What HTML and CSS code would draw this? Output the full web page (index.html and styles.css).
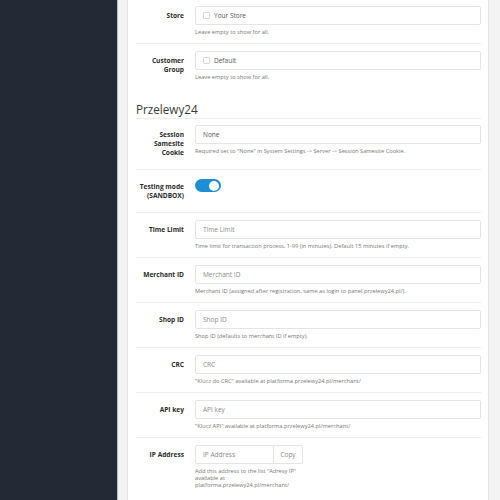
FILE: index.html
```html
<!DOCTYPE html>
<html lang="en">
<head>
    <meta charset="UTF-8">
    <meta name="viewport" content="width=device-width, initial-scale=1.0">
    <title>Przelewy24 - Payment Settings</title>
    <link rel="stylesheet" href="styles.css">
</head>
<body>
    <div class="page">
        <div class="sidebar"></div>
        <div class="content">
            <div class="card">
                <div class="form-row">
                    <label class="form-label">Store</label>
                    <div class="form-field">
                        <div class="check-box">
                            <span class="check"></span>
                            <span>Your Store</span>
                        </div>
                        <div class="help">Leave empty to show for all.</div>
                    </div>
                </div>
                <div class="form-row no-line">
                    <label class="form-label">Customer Group</label>
                    <div class="form-field">
                        <div class="check-box">
                            <span class="check"></span>
                            <span>Default</span>
                        </div>
                        <div class="help">Leave empty to show for all.</div>
                    </div>
                </div>

                <h2 class="section-title">Przelewy24</h2>

                <div class="form-row first">
                    <label class="form-label">Session Samesite Cookie</label>
                    <div class="form-field">
                        <div class="select">None</div>
                        <div class="help">Required set to "None" in System Settings -&gt; Server -&gt; Session Samesite Cookie.</div>
                    </div>
                </div>
                <div class="form-row">
                    <label class="form-label">Testing mode (SANDBOX)</label>
                    <div class="form-field">
                        <div class="switch"><span class="knob"></span></div>
                    </div>
                </div>
                <div class="form-row">
                    <label class="form-label" for="time-limit">Time Limit</label>
                    <div class="form-field">
                        <input class="input" id="time-limit" type="text" placeholder="Time Limit">
                        <div class="help">Time limit for transaction process, 1-99 (in minutes). Default 15 minutes if empty.</div>
                    </div>
                </div>
                <div class="form-row">
                    <label class="form-label" for="merchant-id">Merchant ID</label>
                    <div class="form-field">
                        <input class="input" id="merchant-id" type="text" placeholder="Merchant ID">
                        <div class="help">Merchant ID (assigned after registration, same as login to panel.przelewy24.pl/).</div>
                    </div>
                </div>
                <div class="form-row">
                    <label class="form-label" for="shop-id">Shop ID</label>
                    <div class="form-field">
                        <input class="input" id="shop-id" type="text" placeholder="Shop ID">
                        <div class="help">Shop ID (defaults to merchant ID if empty).</div>
                    </div>
                </div>
                <div class="form-row">
                    <label class="form-label" for="crc">CRC</label>
                    <div class="form-field">
                        <input class="input" id="crc" type="text" placeholder="CRC">
                        <div class="help">"Klucz do CRC" available at platforma.przelewy24.pl/merchant/</div>
                    </div>
                </div>
                <div class="form-row">
                    <label class="form-label" for="api-key">API key</label>
                    <div class="form-field">
                        <input class="input" id="api-key" type="text" placeholder="API key">
                        <div class="help">"Klucz API" available at platforma.przelewy24.pl/merchant/</div>
                    </div>
                </div>
                <div class="form-row no-line">
                    <label class="form-label" for="ip-address">IP Address</label>
                    <div class="form-field narrow">
                        <div class="input-group">
                            <input class="input" id="ip-address" type="text" placeholder="IP Address">
                            <button class="btn-copy" type="button">Copy</button>
                        </div>
                        <div class="help">Add this address to the list "Adresy IP" available at platforma.przelewy24.pl/merchant/</div>
                    </div>
                </div>
            </div>
        </div>
    </div>
</body>
</html>
```

FILE: styles.css
```css
body {
    font-family: "Open Sans", "DejaVu Sans", sans-serif;
    background-color: #f3f3f3;
    margin: 0;
    color: #333;
}
.page {
    display: flex;
    height: 500px;
    overflow: hidden;
}
.sidebar {
    width: 117px;
    flex-shrink: 0;
    background: #232a36;
    border-right: 1px solid #b9bdc3;
}
.content {
    flex: 1;
    padding: 0 11px 0 9px;
    overflow: hidden;
}
.card {
    margin-top: -2px;
    padding: 0 7px 20px 8px;
    background: #fff;
    border: 1px solid #e3e3e3;
    min-height: 520px;
}
.form-row {
    display: grid;
    grid-template-columns: 59px 1fr;
    padding: 7px 0 7px;
    border-bottom: 1px solid #ededed;
}
.form-row.no-line {
    border-bottom: none;
}
.form-row.first {
    padding-top: 6px;
}
.form-label {
    padding: 5px 11px 5px 0;
    font-size: 6.6px;
    line-height: 9px;
    font-weight: bold;
    text-align: right;
    color: #2b2b2b;
}
.form-field {
    min-width: 0;
}
.form-field.narrow {
    width: 108px;
}
.input,
.select,
.check-box {
    display: flex;
    align-items: center;
    box-sizing: border-box;
    width: 100%;
    height: 19px;
    margin: 0;
    padding: 0 7px;
    border: 1px solid #e2e4e7;
    border-radius: 2px;
    background: #fff;
    font-family: inherit;
    font-size: 6.5px;
    color: #555;
    outline: none;
}
.input::placeholder {
    color: #8a8a8a;
}
.check-box {
    gap: 4px;
}
.check {
    width: 5px;
    height: 5px;
    border: 1px solid #d4d6d9;
    border-radius: 1px;
}
.help {
    margin-top: 4px;
    font-size: 5.7px;
    line-height: 7px;
    color: #777;
}
.section-title {
    margin: 14px 0 0;
    padding-bottom: 2px;
    font-size: 11.7px;
    line-height: 14px;
    font-weight: normal;
    color: #3a3a3a;
    border-bottom: 1px solid #ededed;
}
.switch {
    position: relative;
    width: 26px;
    height: 13px;
    margin-top: 2px;
    border-radius: 7px;
    background: #1e8fd2;
}
.knob {
    position: absolute;
    top: 1.5px;
    right: 2px;
    width: 10px;
    height: 10px;
    border-radius: 50%;
    background: #fff;
}
.input-group {
    display: flex;
}
.input-group .input {
    width: 79px;
    border-radius: 2px 0 0 2px;
}
.btn-copy {
    width: 29px;
    height: 19px;
    padding: 0;
    border: 1px solid #e2e4e7;
    border-left: none;
    border-radius: 0 2px 2px 0;
    background: #fff;
    font-family: inherit;
    font-size: 6.5px;
    color: #888;
    cursor: pointer;
}
```
